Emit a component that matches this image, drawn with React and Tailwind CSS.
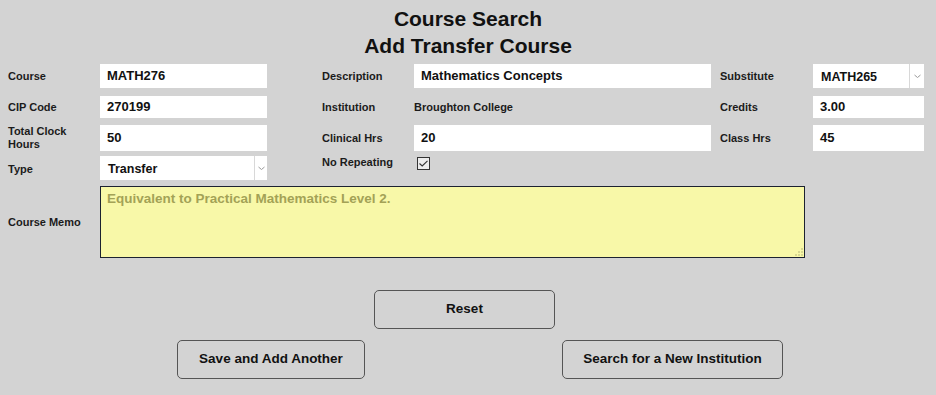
import React from "react";

const label = "font-['Liberation_Sans',Arial,sans-serif] text-[11px] font-bold text-[#1b1b1b] leading-[13px]";
const field =
  "h-full bg-white px-[7px] flex items-center font-['Liberation_Sans',Arial,sans-serif] text-[13px] font-bold text-[#111]";

function Chevron() {
  return (
    <svg width="7" height="5" viewBox="0 0 7 5" className="text-[#9a9a9a]">
      <path d="M0.5 1 L3.5 3.5 L6.5 1" fill="none" stroke="currentColor" strokeWidth="1" />
    </svg>
  );
}

function Select({ value, arrowW = "w-[13px]" }) {
  return (
    <div className="h-full bg-white flex">
      <div className="flex-1 flex items-center pl-[8px] font-['Liberation_Sans',Arial,sans-serif] text-[12.5px] font-bold text-[#111] pt-[2px]">
        {value}
      </div>
      <div className={`${arrowW} border-l border-[#d8d8d8] flex items-center justify-center`}>
        <Chevron />
      </div>
    </div>
  );
}

function Button({ children, className }) {
  return (
    <button
      className={`h-[39px] rounded-[5px] border border-[#555] bg-[#d3d3d3] font-['Liberation_Sans',Arial,sans-serif] text-[13.5px] font-bold text-[#111] ${className}`}
    >
      {children}
    </button>
  );
}

export default function App() {
  const cols = "grid grid-cols-[92px_167px_55px_92px_297px_9px_93px_111px] items-center";
  return (
    <div className="w-[936px] h-[395px] bg-[#d3d3d3] overflow-hidden">
      <div className="pt-[5px] text-center font-['Liberation_Sans',Arial,sans-serif] text-[21px] font-bold text-[#111] leading-[27px]">
        <div>Course Search</div>
        <div>Add Transfer Course</div>
      </div>

      <div className="pl-[8px] pt-[5px]">
        <div className={`${cols} h-[24px]`}>
          <div className={label}>Course</div>
          <div className={field}>MATH276</div>
          <div />
          <div className={label}>Description</div>
          <div className={field}>Mathematics Concepts</div>
          <div />
          <div className={label}>Substitute</div>
          <Select value="MATH265" arrowW="w-[15px]" />
        </div>

        <div className={`${cols} h-[22px] mt-[8px]`}>
          <div className={label}>CIP Code</div>
          <div className={field}>270199</div>
          <div />
          <div className={label}>Institution</div>
          <div className={`${label} pt-[1px]`}>Broughton College</div>
          <div />
          <div className={label}>Credits</div>
          <div className={field}>3.00</div>
        </div>

        <div className={`${cols} h-[23px] mt-[7px]`}>
          <div className={`${label} leading-[12px]`}>
            Total Clock
            <br />
            Hours
          </div>
          <div className={field}>50</div>
          <div />
          <div className={label}>Clinical Hrs</div>
          <div className={field}>20</div>
          <div />
          <div className={label}>Class Hrs</div>
          <div className={field}>45</div>
        </div>

        <div className={`${cols} h-[24px] mt-[8px]`}>
          <div className={`${label} pt-[2px]`}>Type</div>
          <Select value="Transfer" />
          <div />
          <div className={`${label} self-start`}>No Repeating</div>
          <div className="self-start pl-[3px] pt-[1px]">
            <div className="w-[13px] h-[13px] border border-[#333] bg-[#ececec] flex items-center justify-center">
              <svg width="9" height="7" viewBox="0 0 9 7">
                <path d="M0.5 3.5 L3.2 6 L8.5 0.8" fill="none" stroke="#333" strokeWidth="1.1" />
              </svg>
            </div>
          </div>
          <div />
          <div />
          <div />
        </div>

        <div className="flex items-center mt-[6px]">
          <div className={`${label} w-[92px]`}>Course Memo</div>
          <div className="relative w-[705px] h-[72px] border-[1.5px] border-[#1c2230] bg-[#f8f8a8] px-[6px] pt-[2px] font-['Liberation_Sans',Arial,sans-serif] text-[13.5px] font-bold text-[#a3a256]">
            Equivalent to Practical Mathematics Level 2.
            <svg width="8" height="8" viewBox="0 0 8 8" className="absolute right-[1px] bottom-[1px]">
              <rect x="6" y="0" width="2" height="2" fill="#d8d890" />
              <rect x="3" y="3" width="2" height="2" fill="#d8d890" />
              <rect x="6" y="3" width="2" height="2" fill="#d8d890" />
              <rect x="0" y="6" width="2" height="2" fill="#d8d890" />
              <rect x="3" y="6" width="2" height="2" fill="#d8d890" />
              <rect x="6" y="6" width="2" height="2" fill="#d8d890" />
            </svg>
          </div>
        </div>
      </div>

      <div className="flex mt-[32px]">
        <Button className="ml-[374px] w-[181px]">Reset</Button>
      </div>
      <div className="flex mt-[11px]">
        <Button className="ml-[177px] w-[188px]">Save and Add Another</Button>
        <Button className="ml-[197px] w-[221px]">Search for a New Institution</Button>
      </div>
    </div>
  );
}
